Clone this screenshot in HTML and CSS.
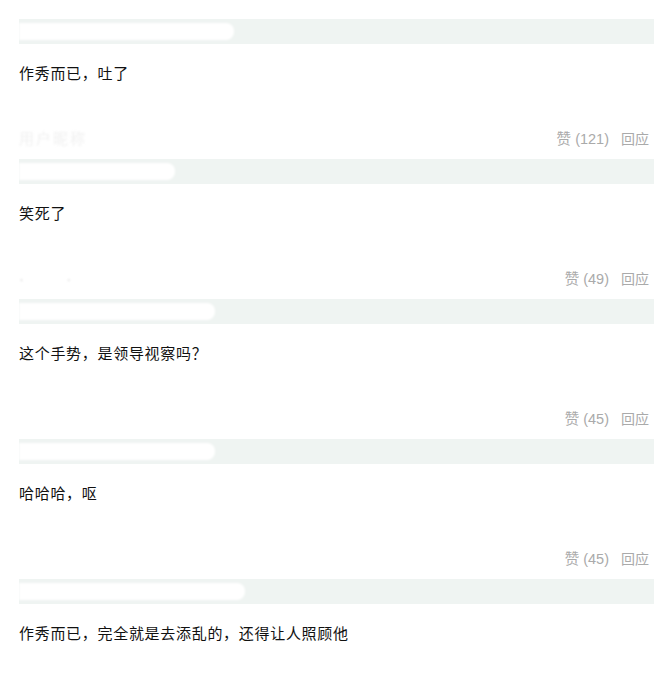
FILE: index.html
```html
<!DOCTYPE html>
<html>
<head lang="zh">
    <meta charset="UTF-8">
    <title>回应</title>
    <link rel="stylesheet" href="styles.css">
</head>
<body>
    <div class="list">
        <div class="item">
            <div class="head"><span class="mask" style="width:215px"></span></div>
            <p class="text">作秀而已，吐了</p>
            <div class="actions"><span class="ghost">用户昵称</span><span class="vote">赞 (121)</span><span class="reply">回应</span></div>
        </div>
        <div class="item">
            <div class="head"><span class="mask" style="width:156px"></span></div>
            <p class="text">笑死了</p>
            <div class="actions"><span class="ghost faint">·　　 ·</span><span class="vote">赞 (49)</span><span class="reply">回应</span></div>
        </div>
        <div class="item">
            <div class="head"><span class="mask" style="width:196px"></span></div>
            <p class="text">这个手势，是领导视察吗？</p>
            <div class="actions"><span class="ghost"></span><span class="vote">赞 (45)</span><span class="reply">回应</span></div>
        </div>
        <div class="item">
            <div class="head"><span class="mask" style="width:196px"></span></div>
            <p class="text">哈哈哈，呕</p>
            <div class="actions"><span class="ghost"></span><span class="vote">赞 (45)</span><span class="reply">回应</span></div>
        </div>
        <div class="item last">
            <div class="head"><span class="mask" style="width:226px"></span></div>
            <p class="text">作秀而已，完全就是去添乱的，还得让人照顾他</p>
        </div>
    </div>
</body>
</html>
```

FILE: styles.css
```css
* {
    margin:0;
    padding:0;
}
body {
    background: #fff;
    font-family: Arial, "Liberation Sans", "Noto Sans CJK SC", sans-serif;
    font-size: 14px;
    color: #111;
}
.list {
    width: 635px;
    padding: 19px 0 0 19px;
}
.item {
    height: 140px;
}
.item.last {
    height: auto;
}
.head {
    height: 25px;
    background: #eff4f2;
    display: flex;
    align-items: center;
}
.head .mask {
    height: 17px;
    background: #fff;
    border-radius: 0 8px 8px 0;
    filter: blur(1px);
}
.text {
    margin-top: 18px;
    line-height: 22px;
    font-family: "Noto Sans CJK SC", sans-serif;
    font-size: 15px;
    letter-spacing: 0.7px;
}
.actions {
    margin-top: 45px;
    height: 20px;
    line-height: 20px;
    display: flex;
    align-items: center;
    padding-right: 5px;
    color: #aaa;
}
.actions .ghost {
    flex: 1;
    color: #f0f0f0;
    font-size: 15px;
    letter-spacing: 2px;
    filter: blur(0.8px);
}
.actions .ghost.faint {
    color: #d4d4d4;
}
.actions .vote {
    font-size: 14.5px;
}
.actions .reply {
    margin-left: 12px;
}
```
